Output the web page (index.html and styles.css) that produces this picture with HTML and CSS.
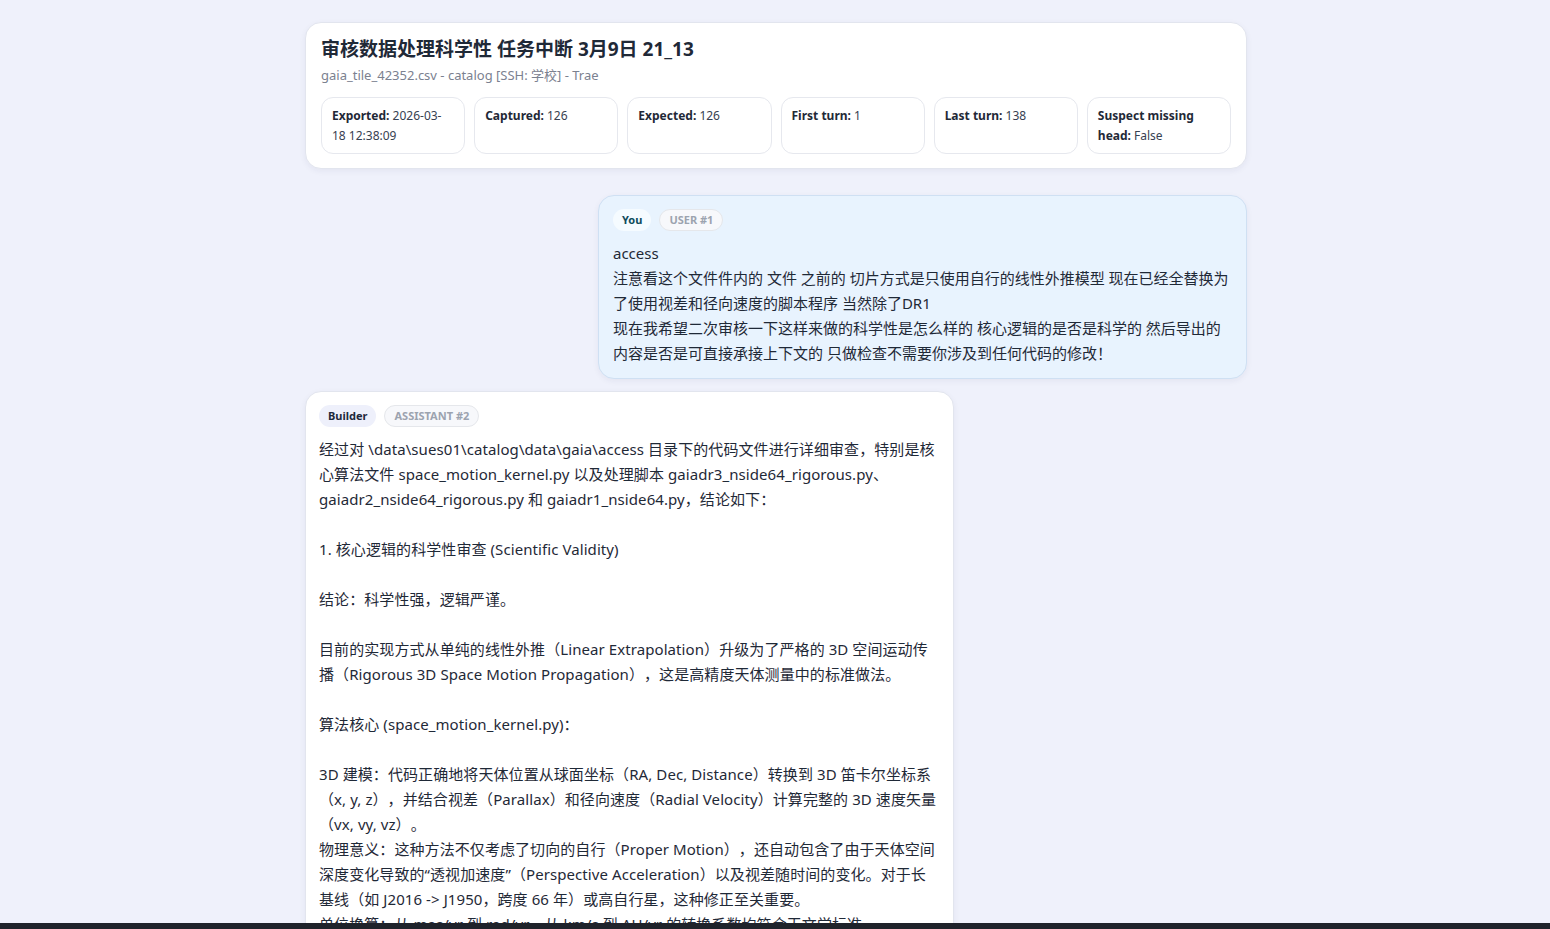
FILE: index.html
```html
<!DOCTYPE html>
<html lang="zh-CN">
<head>
  <meta charset="UTF-8" />
  <meta name="viewport" content="width=device-width, initial-scale=1.0"/>
  <title>审核数据处理科学性 任务中断 3月9日 21_13</title>
  <link rel="stylesheet" href="styles.css">
</head>
<body>

  <main class="page">
    <!-- Export header -->
    <header class="card head">
      <h1 class="title">审核数据处理科学性 任务中断 3月9日 21_13</h1>
      <div class="subtitle">gaia_tile_42352.csv - catalog [SSH: 学校] - Trae</div>
      <div class="meta">
        <div class="meta-item"><b>Exported:</b> 2026-03-18 12:38:09</div>
        <div class="meta-item"><b>Captured:</b> 126</div>
        <div class="meta-item"><b>Expected:</b> 126</div>
        <div class="meta-item"><b>First turn:</b> 1</div>
        <div class="meta-item"><b>Last turn:</b> 138</div>
        <div class="meta-item"><b>Suspect missing head:</b> False</div>
      </div>
    </header>

    <!-- Turns -->
    <section class="msg user">
      <div class="tags">
        <span class="tag who">You</span>
        <span class="tag num">USER #1</span>
      </div>
      <div class="body">access
注意看这个文件件内的 文件 之前的 切片方式是只使用自行的线性外推模型 现在已经全替换为了使用视差和径向速度的脚本程序 当然除了DR1
现在我希望二次审核一下这样来做的科学性是怎么样的 核心逻辑的是否是科学的 然后导出的内容是否是可直接承接上下文的 只做检查不需要你涉及到任何代码的修改！</div>
    </section>

    <section class="msg bot">
      <div class="tags">
        <span class="tag who">Builder</span>
        <span class="tag num">ASSISTANT #2</span>
      </div>
      <div class="body">经过对 \data\sues01\catalog\data\gaia\access 目录下的代码文件进行详细审查，特别是核心算法文件 space_motion_kernel.py 以及处理脚本 gaiadr3_nside64_rigorous.py、gaiadr2_nside64_rigorous.py 和 gaiadr1_nside64.py，结论如下：

1. 核心逻辑的科学性审查 (Scientific Validity)

结论：科学性强，逻辑严谨。

目前的实现方式从单纯的线性外推（Linear Extrapolation）升级为了严格的 3D 空间运动传播（Rigorous 3D Space Motion Propagation），这是高精度天体测量中的标准做法。

算法核心 (space_motion_kernel.py)：

3D 建模：代码正确地将天体位置从球面坐标（RA, Dec, Distance）转换到 3D 笛卡尔坐标系（x, y, z），并结合视差（Parallax）和径向速度（Radial Velocity）计算完整的 3D 速度矢量（vx, vy, vz）。
物理意义：这种方法不仅考虑了切向的自行（Proper Motion），还自动包含了由于天体空间深度变化导致的“透视加速度”（Perspective Acceleration）以及视差随时间的变化。对于长基线（如 J2016 -> J1950，跨度 66 年）或高自行星，这种修正至关重要。
单位换算：从 mas/yr 到 rad/yr，从 km/s 到 AU/yr 的转换系数均符合天文学标准。

2. 导出内容的上下文承接 (Context Continuity)

结论：可以直接承接。</div>
    </section>
  </main>

  <div class="taskbar"></div>

</body>
</html>
```

FILE: styles.css
```css
body {
  font-family: "Segoe UI", "Noto Sans", "Noto Sans CJK SC", sans-serif;
  background: #eff1fb;
  color: #1f2937;
  margin: 0;
  padding: 22px 0 40px;
  text-spacing-trim: space-all;
}

.page {
  width: 942px;
  margin: 0 auto;
  padding-left: 2px;
  display: flex;
  flex-direction: column;
  gap: 12px;
}

.card {
  background: #ffffff;
  border: 1px solid #e2e5ee;
  border-radius: 16px;
  box-shadow: 0 2px 6px rgba(30, 41, 80, 0.06);
}

.head {
  padding: 13px 15px 14px;
  margin-bottom: 14px;
}

.title {
  font-size: 19px;
  font-weight: bold;
  color: #1f2937;
  margin: 0;
  line-height: 26px;
}

.subtitle {
  font-size: 13px;
  color: #7b8190;
  margin-top: 3px;
  line-height: 20px;
}

.meta {
  display: grid;
  grid-template-columns: repeat(6, 1fr);
  gap: 9px;
  margin-top: 12px;
}

.meta-item {
  border: 1px solid #e6e8ee;
  border-radius: 12px;
  padding: 8px 10px 7px;
  font-size: 12px;
  line-height: 20px;
  min-height: 40px;
  color: #374151;
}

.meta-item b {
  color: #1f2937;
}

.msg {
  width: 649px;
  box-sizing: border-box;
  border-radius: 16px;
  padding: 13px 14px 12px;
  box-shadow: 0 2px 6px rgba(30, 41, 80, 0.06);
}

.msg.user {
  align-self: flex-end;
  background: #e8f3fe;
  border: 1px solid #cfe0f3;
}

.msg.bot {
  align-self: flex-start;
  background: #ffffff;
  border: 1px solid #e2e5ee;
  padding-left: 13px;
}

.tags {
  display: flex;
  gap: 8px;
  margin-bottom: 10px;
}

.tag {
  font-size: 11px;
  font-weight: bold;
  line-height: 22px;
  padding: 0 9px;
  border-radius: 11px;
}

.user .who {
  background: #f5fbff;
  color: #0f4c5c;
}

.bot .who {
  background: #eef0fb;
  color: #1e293b;
}

.num {
  color: #9ca3af;
  background: #f7f8fb;
  border: 1px solid #e5e7eb;
  line-height: 20px;
}

.body {
  white-space: pre-wrap;
  font-size: 15px;
  line-height: 25px;
  color: #1f2937;
}

.bot .body {
  letter-spacing: 0.08px;
}

.taskbar {
  position: fixed;
  left: 0;
  right: 0;
  bottom: 0;
  height: 6px;
  background: #1f232b;
}
```
